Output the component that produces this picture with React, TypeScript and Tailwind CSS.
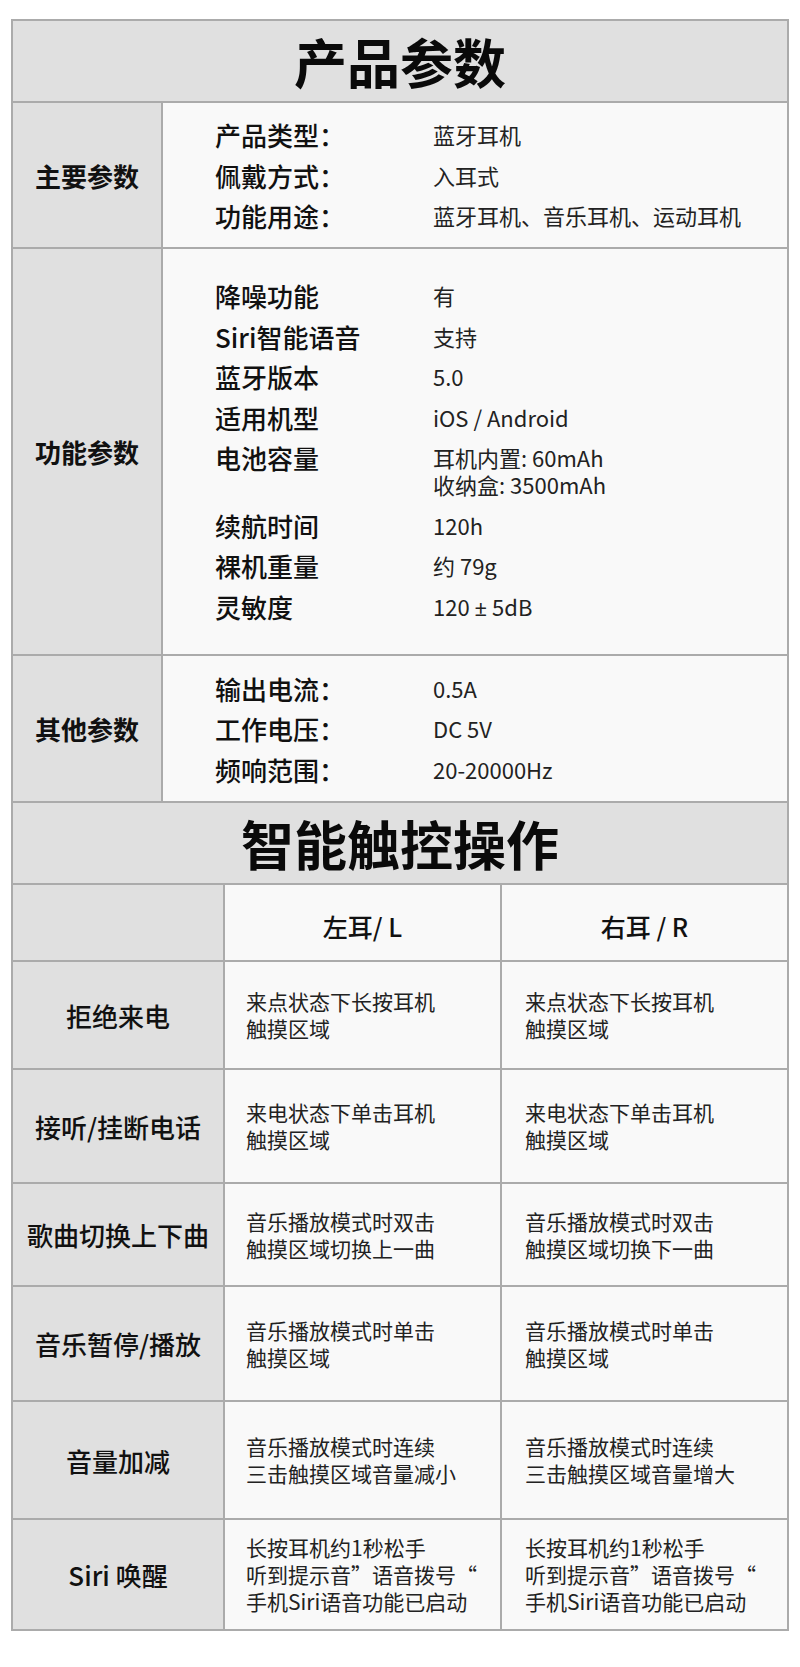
import React from "react";

const FONT = { fontFamily: '"Noto Sans CJK SC", "Noto Sans", sans-serif' };

type Line = { label: string; value: React.ReactNode };

const row1: Line[] = [
  { label: "产品类型：", value: "蓝牙耳机" },
  { label: "佩戴方式：", value: "入耳式" },
  { label: "功能用途：", value: "蓝牙耳机、音乐耳机、运动耳机" },
];

const row2: Line[] = [
  { label: "降噪功能", value: "有" },
  { label: "Siri智能语音", value: "支持" },
  { label: "蓝牙版本", value: "5.0" },
  { label: "适用机型", value: "iOS / Android" },
  {
    label: "电池容量",
    value: (
      <>
        耳机内置: 60mAh
        <br />
        收纳盒: 3500mAh
      </>
    ),
  },
  { label: "续航时间", value: "120h" },
  { label: "裸机重量", value: "约 79g" },
  {
    label: "灵敏度",
    value: (
      <>
        120 <span style={{ fontFamily: '"Noto Sans", sans-serif' }}>±</span> 5dB
      </>
    ),
  },
];

const row3: Line[] = [
  { label: "输出电流：", value: "0.5A" },
  { label: "工作电压：", value: "DC 5V" },
  { label: "频响范围：", value: "20-20000Hz" },
];

function ParamRow({ title, lines, h, last }: { title: string; lines: Line[]; h: string; last?: boolean }) {
  return (
    <div className={`flex ${h} ${last ? "" : "border-b-2 border-[#ababab]"}`}>
      <div className="w-[150px] shrink-0 bg-[#e0e0e0] border-r-2 border-[#ababab] flex items-center justify-center text-[26px] font-bold text-[#111]">
        {title}
      </div>
      <div className="flex-1 bg-[#f9f9f9] pl-[52px] flex flex-col justify-center gap-[13.5px]">
        {lines.map((l) => (
          <div key={l.label} className="flex items-start">
            <div className="w-[218px] shrink-0 text-[26px] leading-[27px] font-medium text-[#111]">{l.label}</div>
            <div className="text-[22px] leading-[27px] text-[#222]">{l.value}</div>
          </div>
        ))}
      </div>
    </div>
  );
}

function Title({ text }: { text: string }) {
  return (
    <div className="h-[82px] bg-[#e0e0e0] border-b-2 border-[#ababab] flex items-center justify-center text-[53px] font-bold text-[#0a0a0a] leading-none">
      {text}
    </div>
  );
}

type Op = { label: string; left: string[]; right: string[]; h: string };

const ops: Op[] = [
  { label: "拒绝来电", left: ["来点状态下长按耳机", "触摸区域"], right: ["来点状态下长按耳机", "触摸区域"], h: "h-[108px]" },
  { label: "接听/挂断电话", left: ["来电状态下单击耳机", "触摸区域"], right: ["来电状态下单击耳机", "触摸区域"], h: "h-[114px]" },
  { label: "歌曲切换上下曲", left: ["音乐播放模式时双击", "触摸区域切换上一曲"], right: ["音乐播放模式时双击", "触摸区域切换下一曲"], h: "h-[103px]" },
  { label: "音乐暂停/播放", left: ["音乐播放模式时单击", "触摸区域"], right: ["音乐播放模式时单击", "触摸区域"], h: "h-[115px]" },
  { label: "音量加减", left: ["音乐播放模式时连续", "三击触摸区域音量减小"], right: ["音乐播放模式时连续", "三击触摸区域音量增大"], h: "h-[118px]" },
  {
    label: "Siri 唤醒",
    left: ["长按耳机约1秒松手", "听到提示音”语音拨号“", "手机Siri语音功能已启动"],
    right: ["长按耳机约1秒松手", "听到提示音”语音拨号“", "手机Siri语音功能已启动"],
    h: "h-[109px]",
  },
];

function OpCell({ lines, right }: { lines: string[]; right?: boolean }) {
  return (
    <div
      className={`bg-[#f9f9f9] flex items-center text-[21px] leading-[27px] text-[#222] ${
        right ? "flex-1 pl-[23px]" : "w-[277px] shrink-0 pl-[21px] border-r-2 border-[#ababab]"
      }`}
    >
      <p className="whitespace-nowrap">
        {lines.map((l, i) => (
          <React.Fragment key={i}>
            {i > 0 && <br />}
            {l}
          </React.Fragment>
        ))}
      </p>
    </div>
  );
}

export default function App() {
  return (
    <div className="bg-white w-[800px] pt-[19px] pb-[36px]" style={FONT}>
      <div className="ml-[11px] w-[778px] border-2 border-[#ababab]">
        <Title text="产品参数" />
        <ParamRow title="主要参数" lines={row1} h="h-[146px]" />
        <ParamRow title="功能参数" lines={row2} h="h-[407px]" />
        <ParamRow title="其他参数" lines={row3} h="h-[147px]" />
        <Title text="智能触控操作" />
        <div className="flex h-[77px] border-b-2 border-[#ababab]">
          <div className="w-[212px] shrink-0 bg-[#e0e0e0] border-r-2 border-[#ababab]" />
          <div className="w-[277px] shrink-0 bg-[#f9f9f9] border-r-2 border-[#ababab] flex items-center justify-center pt-[8px] text-[25px] font-medium text-[#111]">
            左耳/ L
          </div>
          <div className="flex-1 bg-[#f9f9f9] flex items-center justify-center pt-[8px] text-[25px] font-medium text-[#111]">
            右耳 / R
          </div>
        </div>
        {ops.map((o, i) => (
          <div key={o.label} className={`flex ${o.h} ${i < ops.length - 1 ? "border-b-2 border-[#ababab]" : ""}`}>
            <div className="w-[212px] shrink-0 bg-[#e0e0e0] border-r-2 border-[#ababab] flex items-center justify-center text-[26px] font-medium text-[#111] whitespace-nowrap">
              {o.label}
            </div>
            <OpCell lines={o.left} />
            <OpCell lines={o.right} right />
          </div>
        ))}
      </div>
    </div>
  );
}
